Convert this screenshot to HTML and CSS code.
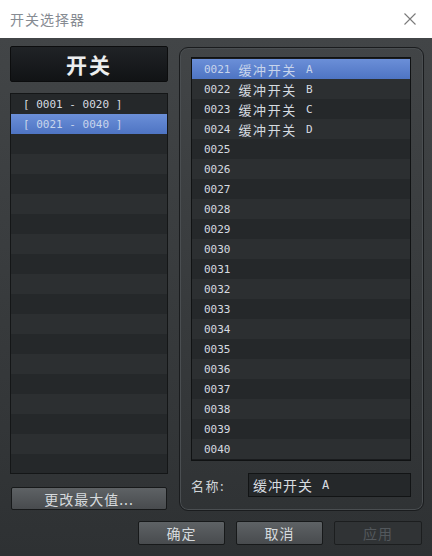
FILE: index.html
```html
<!DOCTYPE html>
<html lang="zh">
<head>
  <meta charset="UTF-8" />
  <title>开关选择器</title>
  <link rel="stylesheet" href="styles.css">
</head>
<body>
  <div class="dialog">
    <div class="titlebar">
      <span class="title">开关选择器</span>
      <svg class="close" width="12" height="12" viewBox="0 0 12 12">
        <path d="M0.5 0.5 L11.5 11.5 M11.5 0.5 L0.5 11.5" stroke="#7a7a7a" stroke-width="1.1" fill="none"/>
      </svg>
    </div>

    <div class="main">
      <div class="content">
        <!-- left: groups -->
        <div class="side">
          <div class="header">开关</div>
          <div class="list" id="groupList"></div>
          <button class="btn wide">更改最大值...</button>
        </div>

        <!-- right: switches -->
        <div class="group">
          <div class="list items" id="itemList"></div>
          <div class="name-row">
            <span class="label">名称:</span>
            <div class="input"><span class="cjk">缓冲开关</span><span class="mono sfx">A</span></div>
          </div>
        </div>
      </div>

      <div class="footer">
        <button class="btn">确定</button>
        <button class="btn">取消</button>
        <button class="btn disabled">应用</button>
      </div>
    </div>
  </div>

  <script>
    const groups = ['[ 0001 - 0020 ]', '[ 0021 - 0040 ]'];
    const names = { 21: '缓冲开关', 22: '缓冲开关', 23: '缓冲开关', 24: '缓冲开关' };
    const suffix = { 21: 'A', 22: 'B', 23: 'C', 24: 'D' };

    let html = '';
    for (let i = 0; i < 19; i++) {
      const cls = i === 1 ? 'row selected' : (i % 2 ? 'row odd' : 'row');
      html += `<div class="${cls}"><span class="mono">${groups[i] || ''}</span></div>`;
    }
    document.getElementById('groupList').innerHTML = html;

    html = '';
    for (let n = 21; n <= 40; n++) {
      const i = n - 21;
      const cls = i === 0 ? 'row selected' : (i % 2 ? 'row odd' : 'row');
      const id = String(n).padStart(4, '0');
      let text = `<span class="mono">${id}</span>`;
      if (names[n]) {
        text += `<span class="cjk name">${names[n]}</span><span class="mono sfx">${suffix[n]}</span>`;
      }
      html += `<div class="${cls}">${text}</div>`;
    }
    document.getElementById('itemList').innerHTML = html;
  </script>
</body>
</html>
```

FILE: styles.css
```css
body {
  margin: 0;
  background: #2f3234;
  font-family: "Noto Sans CJK SC", "Noto Sans", sans-serif;
}
.dialog {
  width: 432px;
  height: 556px;
  display: flex;
  flex-direction: column;
  overflow: hidden;
}
.titlebar {
  height: 38px;
  flex: none;
  background: #ffffff;
  display: flex;
  align-items: center;
  justify-content: space-between;
  padding: 0 16px 0 10px;
}
.title {
  font-size: 14px;
  letter-spacing: 1px;
  color: #868b92;
}
.main {
  flex: 1;
  background: linear-gradient(#424547, #2e3133);
  padding: 8px 8px 0 10px;
}
.content {
  display: flex;
  gap: 11px;
  height: 465px;
}
.side {
  width: 158px;
  flex: none;
  display: flex;
  flex-direction: column;
}
.header {
  height: 34px;
  border: 1px solid #0c0d0e;
  border-radius: 2px;
  background: linear-gradient(#202326, #111315);
  color: #eceeef;
  font-size: 21px;
  font-weight: bold;
  display: flex;
  align-items: center;
  justify-content: center;
  letter-spacing: 2px;
}
.list {
  margin-top: 11px;
  height: 379px;
  border: 1px solid #141617;
  background: #26292b;
  overflow: hidden;
}
.row {
  height: 20px;
  display: flex;
  align-items: center;
  padding-left: 12px;
  background: #25282a;
  color: #d6dbe0;
  white-space: pre;
}
.row.odd {
  background: #2c2f31;
}
.row.selected {
  background: linear-gradient(#6b8fd8, #4e74c3);
  color: #c8d5ec;
}
.mono {
  font-family: "DejaVu Sans Mono", monospace;
  font-size: 11px;
}
.cjk {
  font-size: 13px;
  letter-spacing: 1.6px;
}
.name {
  margin-left: 8px;
}
.sfx {
  margin-left: 9px;
}
.btn {
  height: 24px;
  border: 1px solid #17191a;
  border-radius: 2px;
  background: linear-gradient(#5e6265, #484b4e);
  color: #d6dadd;
  font-family: "Noto Sans CJK SC", sans-serif;
  font-size: 14px;
  letter-spacing: 1px;
  padding: 0;
}
.btn.wide {
  margin: 13px 1px 0 1px;
  height: 23px;
}
.btn.disabled {
  background: #303335;
  border-color: #1c1e1f;
  color: #53585c;
}
.group {
  flex: none;
  width: 245px;
  height: 464px;
  margin-top: 1px;
  border: 1px solid #1a1c1e;
  border-radius: 9px;
  box-shadow: inset 0 0 0 1px #4a4e51;
  padding: 0 12px 0 11px;
  box-sizing: border-box;
}
.list.items {
  margin-top: 9px;
  height: 400px;
  padding: 1px 0;
  background: #1a1c1e;
  border-color: #101213;
}
.name-row {
  display: flex;
  align-items: center;
  margin-top: 12px;
}
.label {
  width: 58px;
  font-size: 13px;
  letter-spacing: 1.5px;
  color: #d0d4d8;
}
.input {
  width: 160px;
  height: 22px;
  border: 1px solid #121415;
  background: #25282a;
  display: flex;
  align-items: center;
  padding-left: 4px;
  color: #d8dce0;
  white-space: pre;
}
.input .cjk {
  font-size: 14px;
  letter-spacing: 1px;
}
.input .mono {
  font-size: 12px;
}
.footer {
  display: flex;
  justify-content: flex-end;
  gap: 11px;
  margin: 10px 2px 0 0;
}
.footer .btn {
  width: 87px;
}
.footer .btn.disabled {
  width: 88px;
}
```
